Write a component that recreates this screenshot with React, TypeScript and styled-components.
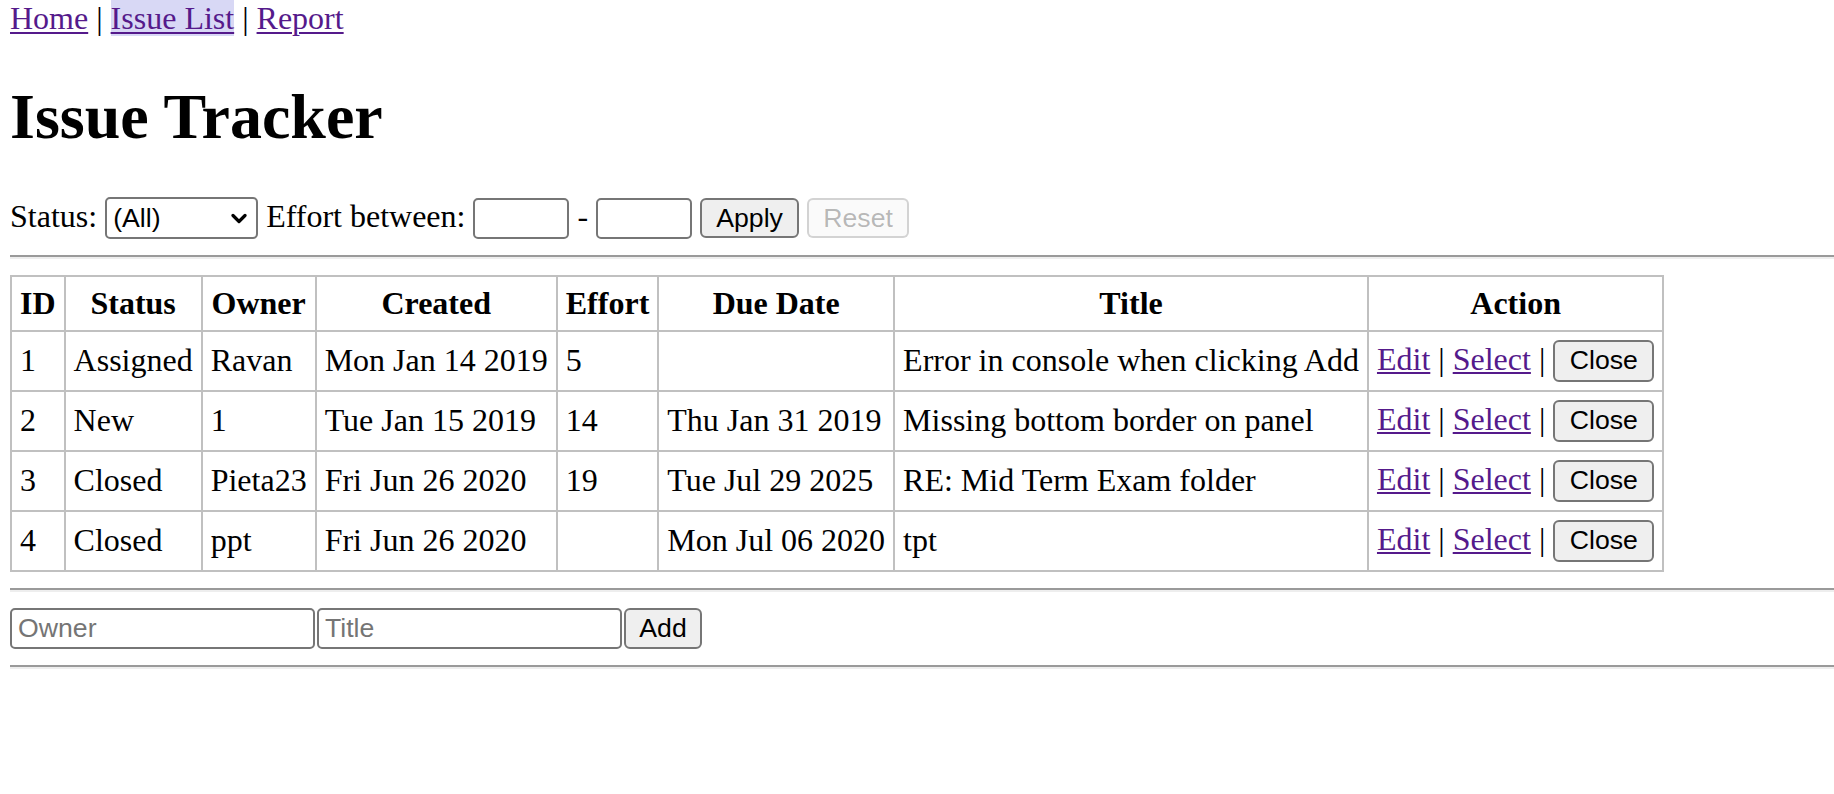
import React from 'react';
import styled, { createGlobalStyle } from 'styled-components';

const GlobalStyle = createGlobalStyle`
  html, body { margin: 0; padding: 0; background: #ffffff; }
  body {
    font-family: "Liberation Serif", "Times New Roman", serif;
    font-size: 32px;
    color: #000000;
  }
`;

const Page = styled.div`
  padding-left: 10px;
`;

const Nav = styled.nav`
  line-height: normal;
`;

const NavItem = styled.a<{ $active?: boolean }>`
  color: #551a8b;
  text-decoration: underline;
  text-decoration-thickness: 2px;
  text-underline-offset: 3px;
  background: ${(p) => (p.$active ? '#d8d8f5' : 'transparent')};
`;

const Heading = styled.h1`
  font-size: 64px;
  font-weight: bold;
  margin: 42.88px 0;
  line-height: normal;
`;

const FilterBar = styled.div`
  line-height: normal;
`;

const SelectWrap = styled.span`
  position: relative;
  display: inline-block;
  vertical-align: baseline;
`;

const Select = styled.select`
  box-sizing: border-box;
  appearance: none;
  -webkit-appearance: none;
  width: 153px;
  height: 42px;
  padding: 0 30px 0 6px;
  border: 2px solid #767676;
  border-radius: 5px;
  background: #ffffff;
  color: #000000;
  font-family: "Liberation Sans", Arial, sans-serif;
  font-size: 26.67px;
`;

const Chevron = styled.svg`
  position: absolute;
  right: 11px;
  top: 50%;
  width: 16px;
  height: 11px;
  margin-top: -5px;
  pointer-events: none;
`;

const TextInput = styled.input<{ $w: number; $h?: number }>`
  box-sizing: border-box;
  width: ${(p) => p.$w}px;
  height: ${(p) => p.$h ?? 41}px;
  margin: 0;
  padding: 0 6px;
  border: 2px solid #767676;
  border-radius: 5px;
  background: #ffffff;
  color: #000000;
  font-family: "Liberation Sans", Arial, sans-serif;
  font-size: 26.67px;
  &::placeholder {
    color: #757575;
  }
`;

const Btn = styled.button<{ $w: number; $h?: number }>`
  box-sizing: border-box;
  width: ${(p) => p.$w}px;
  height: ${(p) => p.$h ?? 40}px;
  margin: 0;
  padding: 0;
  border: 2px solid #767676;
  border-radius: 6px;
  background: #efefef;
  color: #000000;
  font-family: "Liberation Sans", Arial, sans-serif;
  font-size: 26.67px;
  &:disabled {
    color: rgba(16, 16, 16, 0.3);
    border-color: rgba(118, 118, 118, 0.3);
    background: rgba(239, 239, 239, 0.3);
  }
`;

const Rule = styled.hr`
  margin: 16px 0;
  height: 0;
  border: 0;
  border-top: 2px solid #9a9a9a;
  border-bottom: 2px solid #eeeeee;
`;

const Table = styled.table`
  border-collapse: collapse;
  font-size: 32px;
`;

const Th = styled.th`
  padding: 8px;
  border: 2px solid #c0c0c0;
  font-weight: bold;
  text-align: center;
`;

const Td = styled.td`
  padding: 8px;
  border: 2px solid #c0c0c0;
  white-space: nowrap;
`;

const AddForm = styled.form`
  display: flex;
  align-items: center;
  gap: 2px;
  margin: 0;
`;

type Issue = {
  id: number;
  status: string;
  owner: string;
  created: string;
  effort: string;
  due: string;
  title: string;
};

const issues: Issue[] = [
  { id: 1, status: 'Assigned', owner: 'Ravan', created: 'Mon Jan 14 2019', effort: '5', due: '', title: 'Error in console when clicking Add' },
  { id: 2, status: 'New', owner: '1', created: 'Tue Jan 15 2019', effort: '14', due: 'Thu Jan 31 2019', title: 'Missing bottom border on panel' },
  { id: 3, status: 'Closed', owner: 'Pieta23', created: 'Fri Jun 26 2020', effort: '19', due: 'Tue Jul 29 2025', title: 'RE: Mid Term Exam folder' },
  { id: 4, status: 'Closed', owner: 'ppt', created: 'Fri Jun 26 2020', effort: '', due: 'Mon Jul 06 2020', title: 'tpt' },
];

const headers = ['ID', 'Status', 'Owner', 'Created', 'Effort', 'Due Date', 'Title', 'Action'];

export default function App() {
  return (
    <Page>
      <GlobalStyle />
      <Nav>
        <NavItem href="#/">Home</NavItem>
        {' | '}
        <NavItem href="#/issues" $active>Issue List</NavItem>
        {' | '}
        <NavItem href="#/report">Report</NavItem>
      </Nav>
      <Heading>Issue Tracker</Heading>
      <FilterBar>
        Status:{' '}
        <SelectWrap>
          <Select defaultValue="">
            <option value="">(All)</option>
            <option value="New">New</option>
            <option value="Assigned">Assigned</option>
            <option value="Fixed">Fixed</option>
            <option value="Closed">Closed</option>
          </Select>
          <Chevron viewBox="0 0 16 11">
            <path d="M2 2.5 L8 8.5 L14 2.5" fill="none" stroke="#000" strokeWidth="3.2" strokeLinecap="round" strokeLinejoin="round" />
          </Chevron>
        </SelectWrap>
        {' '}Effort between:{' '}
        <TextInput $w={96} />
        {' - '}
        <TextInput $w={96} />
        {' '}
        <Btn type="button" $w={99}>Apply</Btn>
        {' '}
        <Btn type="button" $w={102} disabled>Reset</Btn>
      </FilterBar>
      <Rule />
      <Table>
        <thead>
          <tr>
            {headers.map((h) => (
              <Th key={h}>{h}</Th>
            ))}
          </tr>
        </thead>
        <tbody>
          {issues.map((i) => (
            <tr key={i.id}>
              <Td>{i.id}</Td>
              <Td>{i.status}</Td>
              <Td>{i.owner}</Td>
              <Td>{i.created}</Td>
              <Td>{i.effort}</Td>
              <Td>{i.due}</Td>
              <Td>{i.title}</Td>
              <Td>
                <NavItem href={`#/edit/${i.id}`}>Edit</NavItem>
                {' | '}
                <NavItem href={`#/issues/${i.id}`}>Select</NavItem>
                {' | '}
                <Btn type="button" $w={101} $h={42}>Close</Btn>
              </Td>
            </tr>
          ))}
        </tbody>
      </Table>
      <Rule />
      <AddForm>
        <TextInput $w={305} placeholder="Owner" />
        <TextInput $w={305} placeholder="Title" />
        <Btn type="submit" $w={78} $h={41}>Add</Btn>
      </AddForm>
      <Rule />
    </Page>
  );
}
